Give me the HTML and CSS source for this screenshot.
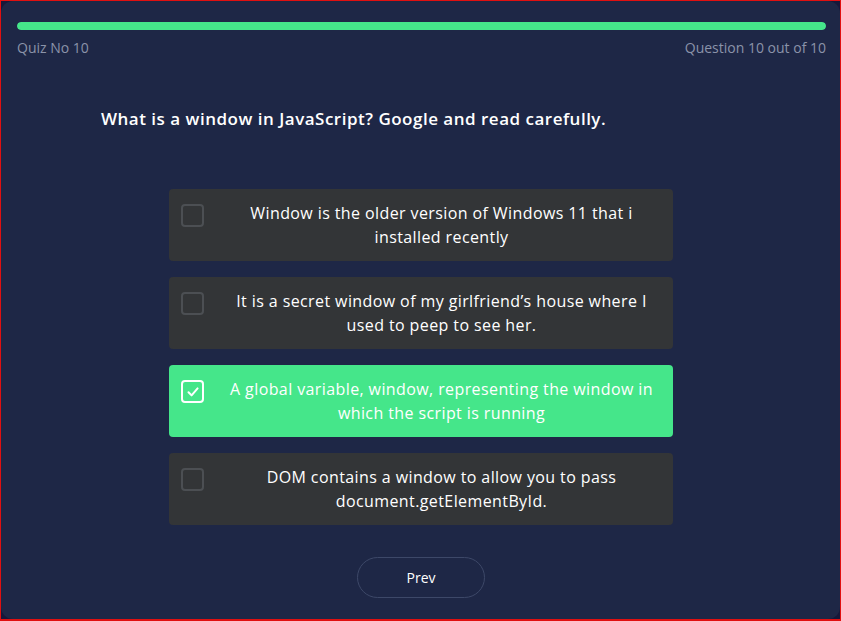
FILE: index.html
```html
<!DOCTYPE html>
<html lang="en">
<head>
<meta charset="utf-8">
<title>Quiz</title>
<link rel="stylesheet" href="styles.css">
</head>
<body>
<div class="frame">
  <main class="card">
    <div class="progress"><div class="progress-fill" style="width:100%"></div></div>
    <div class="meta">
      <span>Quiz No 10</span>
      <span>Question 10 out of 10</span>
    </div>
    <section class="quiz">
      <h1 class="question">What is a window in JavaScript? Google and read carefully.</h1>
      <ul class="options">
        <li class="option">
          <span class="check"></span>
          <span class="label">Window is the older version of Windows 11 that i installed recently</span>
        </li>
        <li class="option">
          <span class="check"></span>
          <span class="label">It is a secret window of my girlfriend’s house where I used to peep to see her.</span>
        </li>
        <li class="option selected">
          <span class="check"><svg viewBox="0 0 22 22" width="22" height="22"><path d="M6.5 11.2 L9.6 14.4 L15.6 7.4" fill="none" stroke="#fff" stroke-width="2" stroke-linecap="round" stroke-linejoin="round"/></svg></span>
          <span class="label">A global variable, window, representing the window in which the script is running</span>
        </li>
        <li class="option">
          <span class="check"></span>
          <span class="label">DOM contains a window to allow you to pass document.getElementById.</span>
        </li>
      </ul>
      <div class="nav"><button class="btn">Prev</button></div>
    </section>
  </main>
</div>
</body>
</html>
```
FILE: styles.css
```css
* { box-sizing: border-box; }
html, body { margin: 0; padding: 0; }
body {
  font-family: "Open Sans", "Liberation Sans", sans-serif;
  background: #ff0000;
}
.frame {
  width: 841px;
  height: 621px;
  border: 1px solid #e01010;
  border-bottom-width: 2px;
  background: #17183a;
}
.card {
  height: 100%;
  background: #1e2746;
  border-radius: 12px;
  padding: 21px 15px 0 16px;
  display: flex;
  flex-direction: column;
}
.progress {
  height: 8px;
  margin-right: -1px;
  border-radius: 4px;
  background: #2c3658;
  overflow: hidden;
}
.progress-fill {
  height: 100%;
  background: #45e68a;
  border-radius: 4px;
}
.meta {
  margin-top: 8px;
  margin-right: -1px;
  display: flex;
  justify-content: space-between;
  font-size: 14px;
  line-height: 20px;
  color: #8b93a9;
}
.quiz {
  width: 640px;
  margin: 0 auto;
  display: flex;
  flex-direction: column;
  align-items: center;
}
.question {
  align-self: stretch;
  margin: 48px 0 0 0;
  font-size: 17px;
  line-height: 25px;
  font-weight: 600;
  letter-spacing: 0.5px;
  color: #ffffff;
}
.options {
  list-style: none;
  margin: 58px 0 0 0;
  padding: 0;
  width: 504px;
  display: flex;
  flex-direction: column;
  gap: 16px;
}
.option {
  min-height: 72px;
  background: #333537;
  border-radius: 4px;
  padding: 12px;
  display: flex;
  align-items: flex-start;
  gap: 14px;
  color: #ffffff;
}
.option.selected { background: #45e68a; }
.check {
  flex: none;
  width: 23px;
  height: 23px;
  margin-top: 3px;
  border: 2px solid #4c4f53;
  border-radius: 4px;
  display: flex;
  align-items: center;
  justify-content: center;
}
.check svg { display: block; flex: none; }
.option.selected .check { border-color: #ffffff; }
.label {
  flex: 1;
  text-align: center;
  font-size: 16px;
  line-height: 24px;
  letter-spacing: 0.4px;
  padding: 0 2px 0 6px;
}
.nav { margin-top: 32px; }
.btn {
  width: 128px;
  height: 41px;
  border: 1px solid #3d4868;
  border-radius: 21px;
  background: transparent;
  color: #ffffff;
  font-family: inherit;
  font-size: 14px;
  font-weight: 500;
  cursor: pointer;
}
```
